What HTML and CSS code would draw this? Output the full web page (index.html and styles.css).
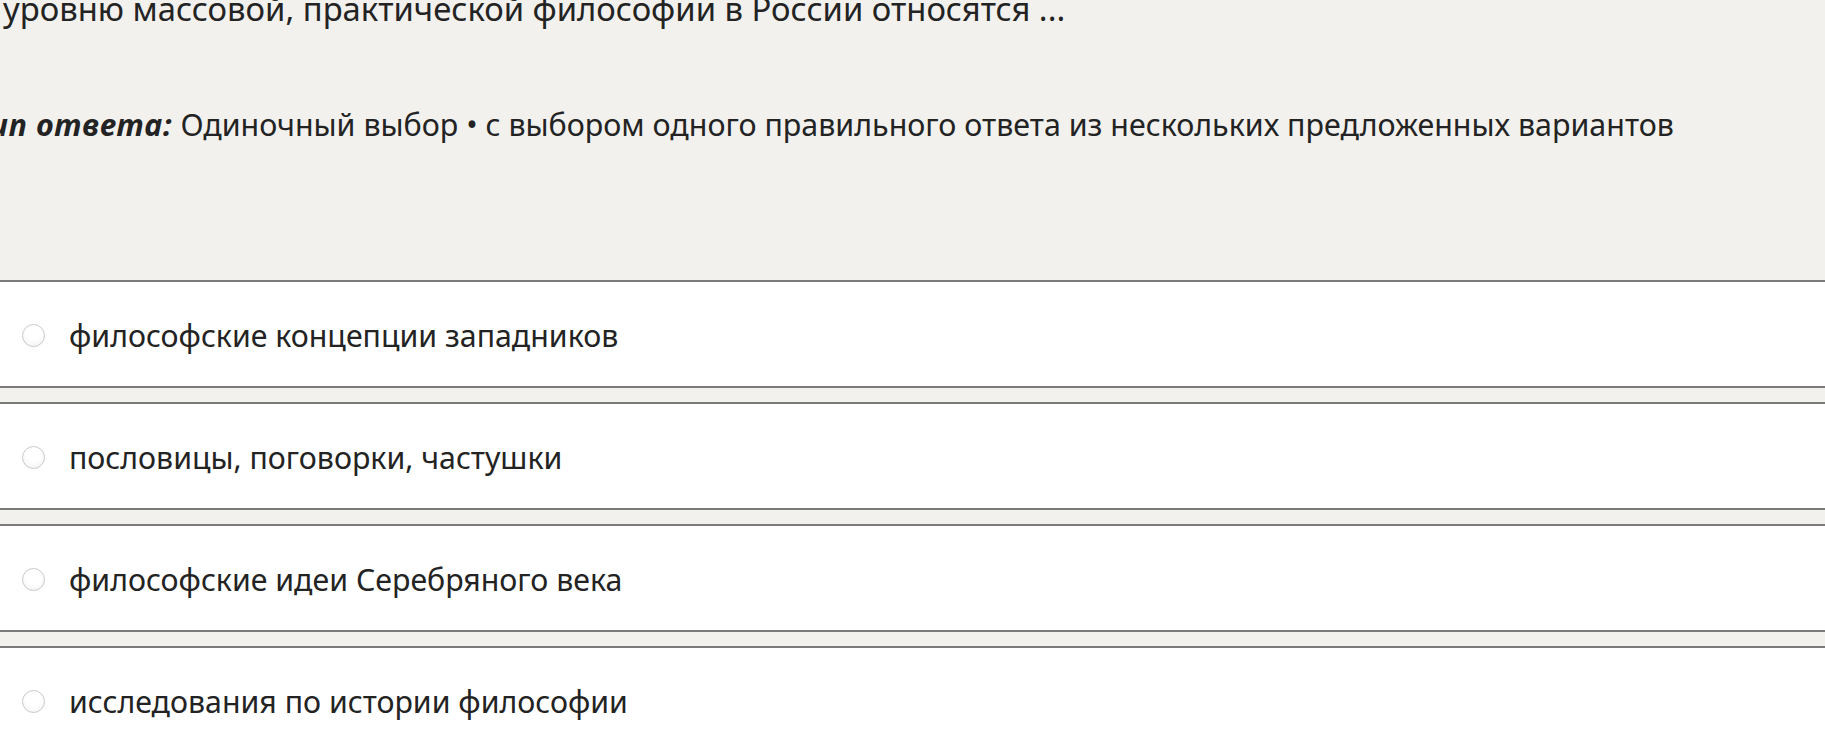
FILE: index.html
```html
<!DOCTYPE html>
<html lang="ru">
<head>
  <meta charset="UTF-8" />
  <meta name="viewport" content="width=device-width, initial-scale=1.0" />
  <title>Вопрос теста</title>
  <link rel="stylesheet" href="styles.css">
</head>
<body>
  <div class="test">
    <div class="question">
      <p class="question-text">К уровню массовой, практической философии в России относятся ...</p>
      <p class="answer-type"><b>Тип ответа:</b> Одиночный выбор • с выбором одного правильного ответа из нескольких предложенных вариантов</p>
    </div>

    <form class="answers">
      <label class="answer">
        <input type="radio" name="answer" value="1">
        <span>философские концепции западников</span>
      </label>
      <label class="answer">
        <input type="radio" name="answer" value="2">
        <span>пословицы, поговорки, частушки</span>
      </label>
      <label class="answer">
        <input type="radio" name="answer" value="3">
        <span>философские идеи Серебряного века</span>
      </label>
      <label class="answer">
        <input type="radio" name="answer" value="4">
        <span>исследования по истории философии</span>
      </label>
    </form>
  </div>
</body>
</html>
```

FILE: styles.css
```css
html, body {
  margin: 0;
  overflow: hidden;
}
body {
  font-family: "Noto Sans", "Open Sans", Arial, sans-serif;
  font-size: 30.3px;
  color: #232323;
  background: #f2f1ee;
}
.test {
  margin: -11px 0 0 -26px;
}
.question p {
  margin: 0;
  line-height: 40px;
}
.question .question-text {
  font-size: 32.8px;
}
.question .answer-type {
  margin-top: 76px;
  font-size: 30.4px;
}
.answer-type b {
  font-style: italic;
  letter-spacing: 0.8px;
}
.answers {
  margin-top: 135px;
  display: flex;
  flex-direction: column;
  gap: 14px;
}
.answer {
  display: flex;
  align-items: center;
  gap: 24px;
  height: 101px;
  padding: 3px 0 0 48px;
  background: #fff;
  border-top: 2px solid #7a7a7a;
  border-bottom: 2px solid #7a7a7a;
  cursor: pointer;
}
.answer input {
  appearance: none;
  margin: 0;
  width: 23px;
  height: 23px;
  border: 1px solid #c9c9c9;
  border-radius: 50%;
  background: radial-gradient(circle at 50% 35%, #fff 40%, #f1f1f1 100%);
  flex-shrink: 0;
}
.answer input:checked {
  background: radial-gradient(circle, #2c2c2c 35%, #fff 40%);
}
```
